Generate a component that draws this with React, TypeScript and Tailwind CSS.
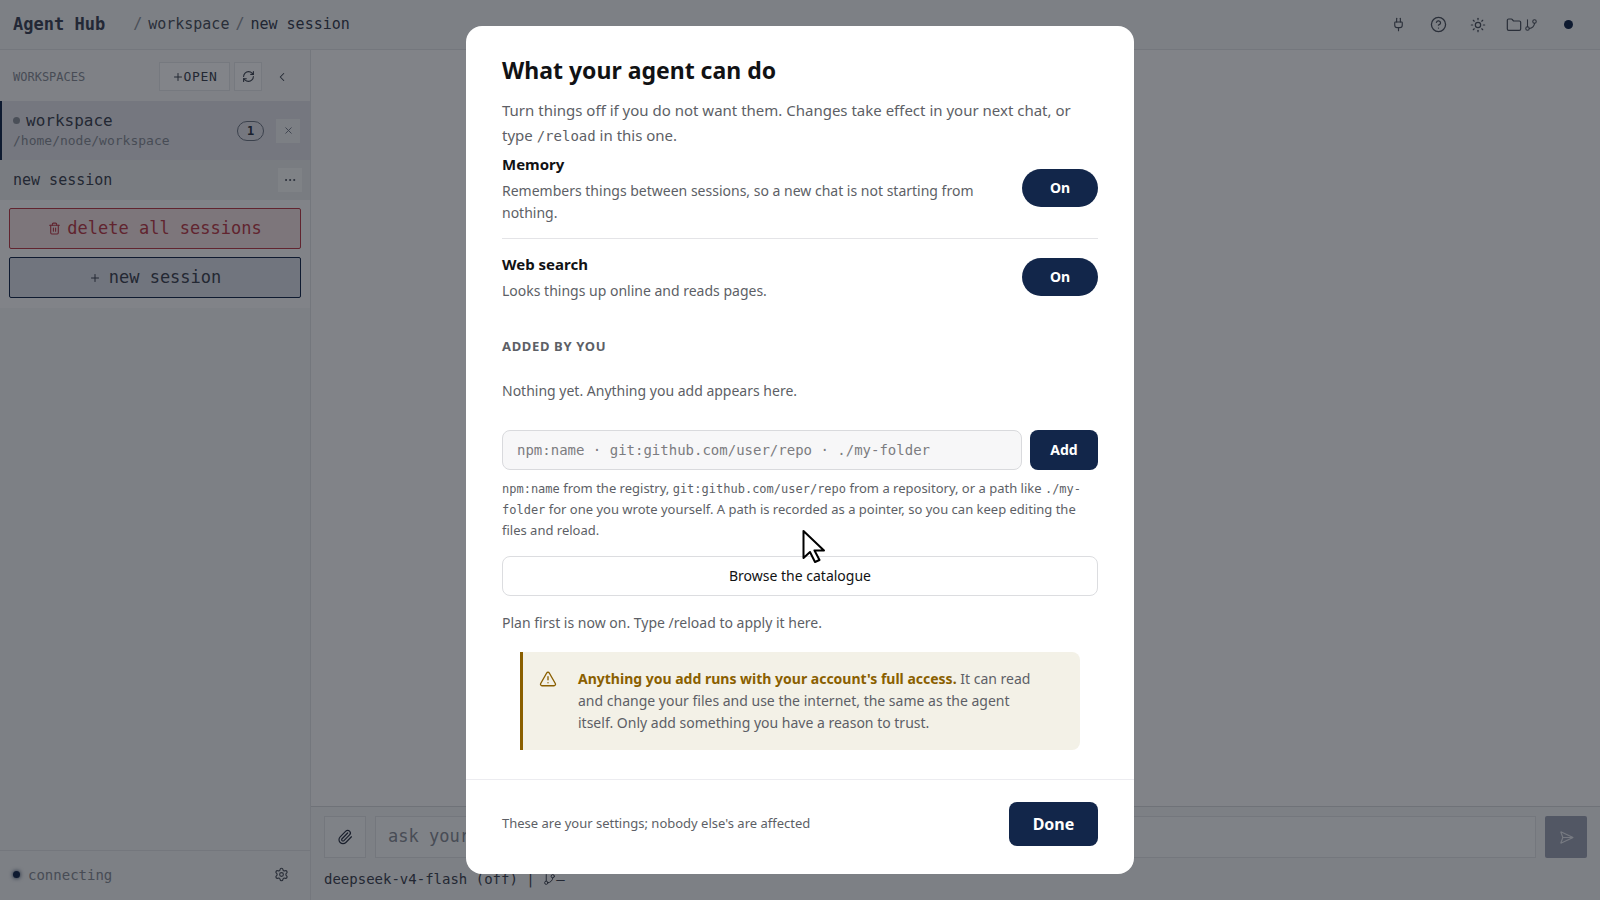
import { type FC, type ReactNode, useState } from "react";
import {
  ChevronLeft,
  CircleQuestionMark,
  Ellipsis,
  Folder,
  GitBranch,
  Paperclip,
  Plug,
  Plus,
  RefreshCw,
  SendHorizontal,
  Settings,
  Sun,
  Trash2,
  TriangleAlert,
  X,
} from "lucide-react";

type IconButtonProps = {
  label: string;
  className?: string;
  children: ReactNode;
};

const IconButton: FC<IconButtonProps> = ({ label, className = "", children }) => (
  <button type="button" aria-label={label} className={`flex items-center justify-center ${className}`}>
    {children}
  </button>
);

const TopBar: FC = () => (
  <header className="flex h-[50px] shrink-0 items-center border-b border-[#dfe1e4] bg-[#f0f2f4] px-[13px]">
    <h1 className="text-[17px] font-bold text-[#3c4356]">Agent Hub</h1>
    <nav aria-label="Breadcrumb" className="ml-7 flex items-center gap-1.5 text-[15px] text-[#4a505c]">
      <span className="text-[#8b909a]">/</span>
      <a href="#workspace">workspace</a>
      <span className="text-[#8b909a]">/</span>
      <a href="#session" className="text-[#363d50]">
        new session
      </a>
    </nav>
    <div className="ml-auto flex items-center text-[#4a505c]">
      <IconButton label="Plugins" className="w-10">
        <Plug size={15} strokeWidth={1.8} />
      </IconButton>
      <IconButton label="Help" className="w-10">
        <CircleQuestionMark size={17} strokeWidth={1.8} />
      </IconButton>
      <IconButton label="Theme" className="w-10">
        <Sun size={16} strokeWidth={1.8} />
      </IconButton>
      <IconButton label="Files and branches" className="w-12 gap-0.5">
        <Folder size={16} strokeWidth={1.8} />
        <GitBranch size={14} strokeWidth={1.8} />
      </IconButton>
      <span className="mr-3.5 ml-[18px] size-[9px] rounded-full bg-[#12264a]" />
    </div>
  </header>
);

const Sidebar: FC = () => (
  <aside className="flex w-[311px] shrink-0 flex-col border-r border-[#dfe1e4] bg-[#f0f2f4]">
    <div className="bg-[#f8f9fa] pb-2.5">
      <div className="flex h-[51px] items-center bg-[#f4f5f7] pt-0.5 pr-4 pl-[13px]">
        <h2 className="text-xs text-[#868b95]">WORKSPACES</h2>
        <button
          type="button"
          className="ml-auto flex h-[29px] w-[71px] items-center justify-center border border-[#e3e5e8] bg-[#fafbfc] text-[13px] tracking-wider text-[#3c4250]"
        >
          <Plus size={12} />
          OPEN
        </button>
        <IconButton label="Refresh" className="ml-1 h-[29px] w-7 border border-[#e3e5e8] bg-[#fafbfc] text-[#3c4250]">
          <RefreshCw size={13} />
        </IconButton>
        <IconButton label="Collapse" className="ml-2 h-7 w-6 text-[#3c4250]">
          <ChevronLeft size={14} strokeWidth={1.8} />
        </IconButton>
      </div>

      <div className="flex h-[59px] items-center border-l-2 border-[#12264a] bg-[#e0e1e9] pr-2.5 pl-[11px]">
        <div>
          <div className="flex items-center gap-1.5 text-base leading-5 text-[#3c4250]">
            <span className="size-[7px] rounded-full bg-[#8b909a]" />
            workspace
          </div>
          <div className="text-[13px] leading-5 text-[#868b95]">/home/node/workspace</div>
        </div>
        <span className="ml-auto flex h-5 w-[27px] items-center justify-center rounded-full border border-[#6d7483] text-xs font-bold text-[#2a3244]">
          1
        </span>
        <IconButton label="Close workspace" className="ml-3 size-6 bg-[#eff0f3] text-[#6d7483]">
          <X size={11} />
        </IconButton>
      </div>

      <div className="flex h-10 items-center bg-[#e9ebed] pr-2 pl-[13px] text-[15px] text-[#3c4250]">
        new session
        <IconButton label="Session menu" className="ml-auto size-6 bg-[#f5f6f7]">
          <Ellipsis size={14} strokeWidth={1.5} />
        </IconButton>
      </div>

      <div className="flex flex-col gap-2 px-[9px] pt-2 text-[17px]">
        <button
          type="button"
          className="flex h-[41px] items-center justify-center gap-1.5 rounded-xs border border-[#b83a48] bg-[#f0dee1] text-[#b83a48]"
        >
          <Trash2 size={13} />
          delete all sessions
        </button>
        <button
          type="button"
          className="flex h-[41px] items-center justify-center gap-2 rounded-xs border border-[#12264a] bg-[#d8dce7] text-[#3c4250]"
        >
          <Plus size={12} />
          new session
        </button>
      </div>
    </div>

    <div className="mt-auto flex h-[50px] items-center border-t border-[#dfe1e4] pr-[21px] pb-0.5 pl-[13px] text-sm text-[#868b95]">
      <span className="mr-2 size-[7px] rounded-full bg-[#12264a] shadow-[0_0_4px_#12264a]" />
      connecting
      <IconButton label="Settings" className="ml-auto text-[#4a505c]">
        <Settings size={15} strokeWidth={1.8} />
      </IconButton>
    </div>
  </aside>
);

const Composer: FC = () => (
  <div className="border-t border-[#d5d7db] bg-[#f0f2f4] px-[13px] pt-[9px]">
    <div className="flex h-[42px] items-stretch gap-[9px]">
      <IconButton label="Attach file" className="w-[42px] border border-[#dfe1e4] bg-[#f5f6f8] text-[#2a3244]">
        <Paperclip size={16} strokeWidth={1.8} />
      </IconButton>
      <input
        aria-label="Message"
        placeholder="ask your agent"
        className="min-w-0 flex-1 border border-[#dfe1e4] bg-[#f5f6f8] px-3 text-[17px] placeholder:text-[#868b95]"
      />
      <IconButton label="Send" className="w-[42px] rounded-xs bg-[#9ba1b2] text-[#e4e7ee]">
        <SendHorizontal size={15} strokeWidth={1.8} />
      </IconButton>
    </div>
    <div className="flex h-[42px] items-center text-sm text-[#3c4250]">
      deepseek-v4-flash (off) |&nbsp;
      <GitBranch size={13} strokeWidth={1.8} />—
    </div>
  </div>
);

type CapabilityProps = {
  name: string;
  description: string;
};

const Capability: FC<CapabilityProps> = ({ name, description }) => {
  const [enabled, setEnabled] = useState(true);

  return (
    <li className="flex items-center gap-6 border-b border-[#e4e4e7] pt-[13px] pb-3.5 first:pt-1 last:border-b-0">
      <div className="flex-1">
        <h3 className="text-[15px] leading-6 font-bold text-[#111214]">{name}</h3>
        <p className="mt-1 text-sm leading-[22px]">{description}</p>
      </div>
      <button
        type="button"
        aria-pressed={enabled}
        onClick={() => setEnabled(!enabled)}
        className="h-[38px] w-[76px] rounded-full bg-[#12264a] text-sm font-bold text-white"
      >
        {enabled ? "On" : "Off"}
      </button>
    </li>
  );
};

const Code: FC<{ children: ReactNode }> = ({ children }) => (
  <code className="font-['DejaVu_Sans_Mono',monospace] text-xs">{children}</code>
);

const CapabilitiesDialog: FC = () => (
  <div
    role="dialog"
    aria-modal="true"
    aria-labelledby="capabilities-title"
    className="w-[668px] max-w-full rounded-2xl bg-white font-['Noto_Sans',sans-serif] text-[#5d5f66]"
  >
    <div className="px-9 pt-7 pb-[29px]">
      <h2 id="capabilities-title" className="text-[23px] leading-8 font-bold text-[#111214]">
        What your agent can do
      </h2>
      <p className="mt-3 text-[15px] leading-[25px]">
        Turn things off if you do not want them. Changes take effect in your next chat, or type{" "}
        <code className="font-['DejaVu_Sans_Mono',monospace] text-sm">/reload</code> in this one.
      </p>

      <ul>
        <Capability
          name="Memory"
          description="Remembers things between sessions, so a new chat is not starting from nothing."
        />
        <Capability name="Web search" description="Looks things up online and reads pages." />
      </ul>

      <h3 className="mt-5 text-[13px] leading-5 font-bold tracking-wider">ADDED BY YOU</h3>
      <p className="mt-6 text-sm leading-[22px]">Nothing yet. Anything you add appears here.</p>

      <div className="mt-7 flex h-10 gap-2">
        <input
          aria-label="Source to add"
          placeholder="npm:name · git:github.com/user/repo · ./my-folder"
          className="min-w-0 flex-1 rounded-lg border border-[#d9dadd] bg-[#f7f7f8] px-3.5 font-['DejaVu_Sans_Mono',monospace] text-sm placeholder:text-[#7c7c80]"
        />
        <button type="button" className="w-[68px] rounded-lg bg-[#12264a] text-sm font-bold text-white">
          Add
        </button>
      </div>
      <p className="mt-2 text-[13px] leading-[21px]">
        <Code>npm:name</Code> from the registry, <Code>git:github.com/user/repo</Code> from a repository, or a path like{" "}
        <Code>./my-folder</Code> for one you wrote yourself. A path is recorded as a pointer, so you can keep editing the
        files and reload.
      </p>
      <button
        type="button"
        className="mt-[15px] h-10 w-full rounded-lg border border-[#dcdde0] text-sm text-[#111214]"
      >
        Browse the catalogue
      </button>
      <p className="mt-4 text-sm leading-[22px]">Plan first is now on. Type /reload to apply it here.</p>

      <div className="mx-[18px] mt-[18px] flex gap-5 rounded-r-lg border-l-3 border-[#8a5f00] bg-[#f3f1e7] py-4 pr-9 pl-4">
        <TriangleAlert size={18} strokeWidth={1.8} className="mt-0.5 mr-px shrink-0 text-[#8a5f00]" />
        <p className="text-sm leading-[22px]">
          <strong className="font-bold text-[#8a5f00]">Anything you add runs with your account's full access.</strong>{" "}
          It can read and change your files and use the internet, the same as the agent itself. Only add something you
          have a reason to trust.
        </p>
      </div>
    </div>

    <footer className="flex items-center justify-between border-t border-[#ececf0] px-9 pt-[22px] pb-7 text-[13px]">
      These are your settings; nobody else's are affected
      <button type="button" className="h-11 w-[89px] rounded-lg bg-[#12264a] text-base font-bold text-white">
        Done
      </button>
    </footer>
  </div>
);

const Pointer: FC = () => (
  <svg
    viewBox="0 0 24 34"
    className="pointer-events-none absolute top-[529px] left-1/2 ml-0.5 h-[34px] w-6"
    aria-hidden="true"
  >
    <path
      d="M1.500 2v27l6.500-6 5 10 4.500-2-5-9.500h9.500z"
      fill="#fff"
      stroke="#000"
      strokeWidth="2"
      strokeLinejoin="round"
    />
  </svg>
);

export default function App() {
  return (
    <div className="flex h-screen flex-col overflow-hidden bg-[#f8f9fb] font-['DejaVu_Sans_Mono',monospace]">
      <TopBar />
      <div className="flex min-h-0 flex-1">
        <Sidebar />
        <main className="flex min-w-0 flex-1 flex-col justify-end">
          <Composer />
        </main>
      </div>
      <div className="fixed inset-0 flex items-center justify-center bg-[#0a0e16]/50">
        <CapabilitiesDialog />
        <Pointer />
      </div>
    </div>
  );
}
